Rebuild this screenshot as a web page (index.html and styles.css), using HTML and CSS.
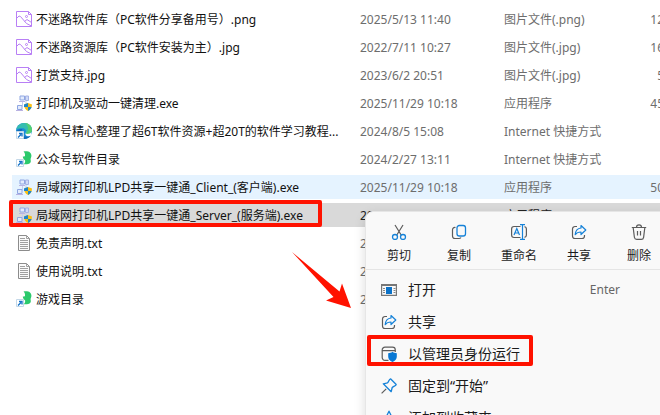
FILE: index.html
```html
<!DOCTYPE html>
<html lang="zh-CN">
<head>
<meta charset="utf-8">
<title>文件列表</title>
<link rel="stylesheet" href="styles.css">
</head>
<body>
<svg class="symbols" aria-hidden="true">
  <symbol id="picture" viewBox="0 0 16 16"><g fill="none" stroke="#b87ff5"><path d="M.5.5h12l3 3v12H.5z"/><path d="M12.500.5v3h3" /><path d="M.5 7.500 3 5l1.500.5 6 7 5 2.500"/><path d="M8.500 10.500 11 8.500l4.500 3"/><circle cx="10.500" cy="5.500" r="1"/></g></symbol>
  <symbol id="program" viewBox="0 0 16 16"><path d="M6.500 6.500v5M10 6v4" stroke="#c3cff0" fill="none"/><path d="M4 1h4.500v4H4zM1.500 10.500H6v4H1.500z" fill="#e3ebfc" stroke="#8fa6e2"/><path d="M9.500 1h3v4.500h-3z" fill="#cfdaf8" stroke="#a5b2e4"/><path d="M0 15.500h7M3 6.500h6" stroke="#b9b2e2"/><path d="M12 8l4 1.500c0 3.500-1.500 5.200-4 6.500-2.500-1.300-4-3-4-6.500z" fill="#f9c015"/><path d="M12 8 8 9.500V12h4zM12 12h3.600c-.5 1.900-1.800 3.100-3.600 4z" fill="#1c86cc"/></symbol>
  <symbol id="edge" viewBox="0 0 16 16"><circle cx="8" cy="8" r="8" fill="#1b8cd8"/><path d="M.3 6.500C1.300 2.300 4.500 0 8.200 0 13 0 16 3.300 16 6.700 16 9.300 14.200 11 11.500 11c-2 0-2.500-.8-1.800-1.700.9-1.500-.3-4-3.300-4C3.700 5.300 1.500 5.600.3 6.500z" fill="#36bdb0"/><path d="M9 0c4.600.3 7 3.500 7 6.700 0 2.600-1.800 4.300-4.500 4.300-1 0-1.700-.2-2-.6C13 9 13 3 9 0z" fill="#55cf73"/><path d="M6.500 6C4 9 6 14 11 13.700c1.600 0 2.800-.5 4-1.200C13.600 14.800 11 16 8 16 3.500 16 .8 13 .2 9 1 7 3.500 5.600 6.500 6z" fill="#126bb8"/><path d="M9.500 9.300c-.8 1 0 1.700 2 1.700 1.700 0 3-.6 3.900-1.700v3c-2.700 2-7 .9-5.900-3z" fill="#fff"/></symbol>
  <symbol id="shortcut" viewBox="0 0 8 8"><path d="M.5.5h7v7h-7z" fill="#fff" stroke="#c4d8e8"/><path d="M2 6.500 5 3.500M3 2.500h3v3" fill="none" stroke="#1673c8" stroke-width="1.300"/></symbol>
  <symbol id="link" viewBox="0 0 16 16"><path d="M7.500.5C10 .2 12.500.2 14 1.500c1.700 1.600 1.800 4 .8 5.700-.6 1 .2 2 0 3.300-.3 1.900-1.800 2.700-4 2.700H7.500c1.500-1 1.800-2.200 1.600-3.700-.9-1-2.300-2-2.300-4 .7.200 1.600 0 2.200-.6C9.300 3 8.500 1.500 7.500.5z" fill="#2cc96c"/></symbol>
  <symbol id="text" viewBox="0 0 16 16"><path d="M2.500.5h8l3 3v12h-11z" fill="#fafafa" stroke="#8c8c8c"/><path d="M10.500.5v3h3M4 3.500h5M4 5.500h8M4 7.500h8M4 9.500h8M4 11.500h8M4 13.500h8" stroke="#a0a0a0" fill="none"/></symbol>
  <symbol id="share" viewBox="0 0 16 16"><path d="M6 2.500H4A2.500 2.500 0 0 0 1.500 5v7A2.500 2.500 0 0 0 4 14.500h7a2.500 2.500 0 0 0 2.500-2.500v-1" fill="none" stroke="#5c5c5c" stroke-width="1.200"/><path d="M10 1.500 14.800 6 10 10.500V8C7.200 8 5.500 8.800 4.200 10.700 4.500 7 6.500 4.300 10 4z" fill="none" stroke="#1682d8" stroke-width="1.200" stroke-linejoin="round"/></symbol>
</svg>

<table class="files">
  <colgroup><col><col class="col-date"><col class="col-type"><col class="col-size"></colgroup>
  <tbody>
    <tr><td><span class="name"><svg class="icon"><use href="#picture"/></svg>不迷路软件库（PC软件分享备用号）.png</span></td><td>2025/5/13 11:40</td><td>图片文件(.png)</td><td>12</td></tr>
    <tr><td><span class="name"><svg class="icon"><use href="#picture"/></svg>不迷路资源库（PC软件安装为主）.jpg</span></td><td>2022/7/11 10:27</td><td>图片文件(.jpg)</td><td>16</td></tr>
    <tr><td><span class="name"><svg class="icon"><use href="#picture"/></svg>打赏支持.jpg</span></td><td>2023/6/2 20:51</td><td>图片文件(.jpg)</td><td>5</td></tr>
    <tr><td><span class="name"><svg class="icon"><use href="#program"/></svg>打印机及驱动一键清理.exe</span></td><td>2025/11/29 10:18</td><td>应用程序</td><td>45</td></tr>
    <tr><td><span class="name"><svg class="icon"><use href="#edge"/><use href="#shortcut" y="8" width="8" height="8"/></svg>公众号精心整理了超6T软件资源+超20T的软件学习教程...</span></td><td>2024/8/5 15:08</td><td>Internet 快捷方式</td><td></td></tr>
    <tr><td><span class="name"><svg class="icon"><use href="#link"/><use href="#shortcut" y="8" width="8" height="8"/></svg>公众号软件目录</span></td><td>2024/2/27 13:11</td><td>Internet 快捷方式</td><td></td></tr>
    <tr class="hovered"><td><span class="name"><svg class="icon"><use href="#program"/></svg>局域网打印机LPD共享一键通_Client_(客户端).exe</span></td><td>2025/11/29 10:18</td><td>应用程序</td><td>50</td></tr>
    <tr class="selected"><td><span class="name"><svg class="icon"><use href="#program"/></svg>局域网打印机LPD共享一键通_Server_(服务端).exe</span></td><td>20</td><td>应用程序</td><td></td></tr>
    <tr><td><span class="name"><svg class="icon"><use href="#text"/></svg>免责声明.txt</span></td><td>2</td><td></td><td></td></tr>
    <tr><td><span class="name"><svg class="icon"><use href="#text"/></svg>使用说明.txt</span></td><td>2</td><td></td><td></td></tr>
    <tr><td><span class="name"><svg class="icon"><use href="#link"/><use href="#shortcut" y="8" width="8" height="8"/></svg>游戏目录</span></td><td>2</td><td></td><td></td></tr>
  </tbody>
</table>

<div class="menu">
  <div class="toolbar">
    <button type="button"><svg class="tool" viewBox="0 0 16 16" fill="none"><path d="M4 1l6.200 10M12 1 5.800 11" stroke="#5c5c5c" stroke-width="1.200"/><circle cx="4" cy="13" r="2.500" stroke="#1682d8" stroke-width="1.300"/><circle cx="12" cy="13" r="2.500" stroke="#1682d8" stroke-width="1.300"/></svg>剪切</button>
    <button type="button"><svg class="tool" viewBox="0 0 16 16" fill="none"><path d="M4.500 3.500A2.300 2.300 0 0 0 1.500 6v6a2.500 2.500 0 0 0 2.500 2.500h4a2.500 2.500 0 0 0 2-1" stroke="#5c5c5c" stroke-width="1.200"/><rect x="6" y="1.500" width="8.500" height="10.500" rx="2.300" stroke="#1682d8" stroke-width="1.300"/></svg>复制</button>
    <button type="button"><svg class="tool" viewBox="0 0 16 16" fill="none"><path d="M9.500 2.500H3A2.500 2.500 0 0 0 .6 5v6A2.500 2.500 0 0 0 3 13.500h6.500M13.500 2.600A2.400 2.400 0 0 1 15.400 5v6a2.400 2.400 0 0 1-1.900 2.400" stroke="#5c5c5c" stroke-width="1.200"/><path d="M9 .6h5M11.500.6v14.800M9 15.400h5M3 11l2.800-6.500L8.500 11M4 9h3.600" stroke="#1682d8" stroke-width="1.200"/></svg>重命名</button>
    <button type="button"><svg class="tool"><use href="#share"/></svg>共享</button>
    <button type="button"><svg class="tool" viewBox="0 0 16 16" fill="none" stroke="#5c5c5c" stroke-width="1.200"><path d="M.8 3.500h14.400M5.500 3.300C5.500.1 10.500.1 10.500 3.300M2.200 3.700l1.200 9.600q.3 2.100 2.300 2.100h4.600q2 0 2.300-2.100l1.200-9.600M6.500 7v4.500M9.500 7v4.500"/></svg>删除</button>
  </div>
  <div class="commands">
    <button type="button"><svg class="icon" viewBox="0 0 16 16"><path d="M.6 2.600h14.800v10.800H.6z" fill="#f9f9f9" stroke="#777" stroke-width="1.200"/><path d="M0 2h16v2H0z" fill="#777"/><path d="M2 6.500h2M2 8.500h2M2 10.500h2M12.500 6.500h2M12.500 8.500h2M12.500 10.500h2" stroke="#888"/><path d="M5 5h6v7H5z" fill="#0b72c8"/></svg><span>打开</span><kbd>Enter</kbd></button>
    <button type="button"><svg class="icon"><use href="#share"/></svg><span>共享</span></button>
    <button type="button"><svg class="icon" viewBox="0 0 16 16"><path d="M7.500 14.400H4A2.800 2.800 0 0 1 1.200 11.600V4A2.800 2.800 0 0 1 4 1.200h7.500A2.800 2.800 0 0 1 14.300 4v2M1.200 4.700h13" fill="none" stroke="#5c5c5c" stroke-width="1.200"/><path d="M11.500 5.800c1.300 1 2.600 1.400 4.300 1.500v3.500c0 2.200-1.500 4-4.300 5.100-2.800-1.100-4.300-2.900-4.300-5.100V7.300c1.700-.1 3-.5 4.300-1.500z" fill="#0878d4"/></svg><span>以管理员身份运行</span></button>
    <button type="button"><svg class="icon" viewBox="0 0 16 16" fill="none"><path d="M.6 15.400l4.600-4.600" stroke="#5c5c5c" stroke-width="1.200"/><path d="M9.500.8l5.700 5.700c-.2 1.500-2.500 1.500-4 3l-1 4.200L2.300 5.800l4.200-1c1.500-1.500 1.500-3.800 3-4z" stroke="#1682d8" stroke-width="1.300" stroke-linejoin="round"/></svg><span>固定到“开始”</span></button>
    <button type="button"><svg class="icon" viewBox="0 0 16 16" fill="none"><path d="M8 1.200l2.100 4.300 4.800.7-3.500 3.300.9 4.700L8 12l-4.300 2.200.9-4.700L1.100 6.200l4.800-.7z" stroke="#1682d8" stroke-width="1.300" stroke-linejoin="round"/></svg><span>添加到收藏夹</span></button>
  </div>
</div>

<div class="mark mark-file"></div>
<div class="mark mark-command"></div>
<svg class="arrow" viewBox="0 0 60 57" aria-hidden="true"><path d="M0 0 47.500 39.500 50 31.500 59 56 34 48.500 41.500 45z" fill="#ff1200"/></svg>
</body>
</html>
```
FILE: styles.css
```css
body {
  margin: 0;
  background: #fff;
  color: #111;
  font: 12px/22px "Noto Sans", "Noto Sans CJK SC", sans-serif;
  position: relative;
  min-height: 100vh;
  overflow: hidden;
}

.symbols {
  position: absolute;
  width: 0;
  height: 0;
}

.icon,
.tool {
  width: 16px;
  height: 16px;
  flex: none;
}

.files {
  width: calc(100% - 8px);
  margin: 3px 0 0 12px;
  table-layout: fixed;
  border-collapse: separate;
  border-spacing: 0 4px;
}

.col-date { width: 144px; }
.col-type { width: 114px; }
.col-size { width: 46px; }

.files td {
  height: 22px;
  padding: 2px 0 0;
  color: #6d6d6d;
  white-space: nowrap;
}

.files td:first-child { color: #111; }
.files td:last-child { text-align: right; }

.name {
  display: flex;
  align-items: flex-start;
  gap: 4px;
  height: 22px;
  padding-left: 4px;
}

.name .icon { margin-top: 2px; }

.hovered { background: #e5f3ff; }
.selected { background: #d9d9d9; }
.selected td { color: #222; }

.menu {
  position: absolute;
  left: 365px;
  top: 211px;
  width: 306px;
  border: 1px solid #e6e6e6;
  border-radius: 8px;
  background: #f9f9f9;
  box-shadow: 0 4px 12px rgba(0, 0, 0, 0.14);
}

.menu button {
  border: 0;
  padding: 0;
  background: none;
  color: #1b1b1b;
  font-family: inherit;
}

.toolbar {
  display: flex;
  padding: 12px 3px 2px;
  border-bottom: 1px solid #e5e5e5;
}

.toolbar button {
  display: flex;
  flex: 1;
  flex-direction: column;
  align-items: center;
  gap: 5px;
  font-size: 12px;
  line-height: 22px;
}

.commands {
  display: flex;
  flex-direction: column;
  padding: 4px 0;
}

.commands button {
  display: flex;
  align-items: center;
  gap: 11px;
  height: 32px;
  padding: 0 52px 0 15px;
  font-size: 14px;
  line-height: 32px;
}

.commands kbd {
  margin-left: auto;
  color: #666;
  font: 12px/32px "Noto Sans", sans-serif;
}

.mark {
  position: absolute;
  box-sizing: border-box;
  border: 4px solid #ff1200;
  border-radius: 2px;
}

.mark-file {
  left: 9px;
  top: 200px;
  width: 313px;
  height: 27px;
}

.mark-command {
  left: 367px;
  top: 335px;
  width: 166px;
  height: 31px;
}

.arrow {
  position: absolute;
  left: 292px;
  top: 252px;
  width: 60px;
  height: 57px;
}
```
